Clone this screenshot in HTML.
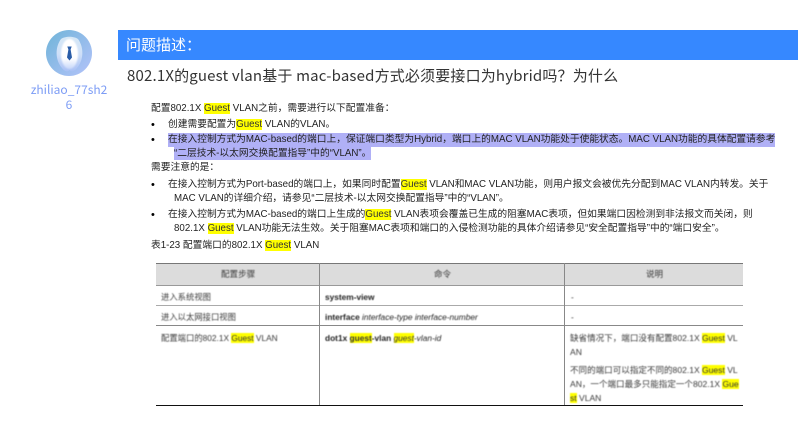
<!DOCTYPE html>
<html><head><meta charset="utf-8"><style>
html,body{margin:0;padding:0;background:#fff;width:811px;height:431px;overflow:hidden}
body{position:relative;font-family:"Noto Sans CJK SC","Liberation Sans",sans-serif}
.a{position:absolute;white-space:nowrap}
.bar{left:118px;top:30px;width:680px;height:30px;background:#3688ff;color:#fff;font-size:15px;line-height:30px;text-indent:8px}
.title{left:127px;top:64px;font-size:15px;line-height:24px;color:#333;letter-spacing:.17px}
.name{left:30px;width:78px;text-align:center;font-size:12px;line-height:15px;color:#7c9cf5;font-family:"Noto Sans CJK SC",sans-serif}
#doc{position:absolute;left:0;top:0;width:811px;height:431px;filter:blur(.3px)}
#tbl{position:absolute;left:0;top:0;width:811px;height:431px;filter:blur(.45px)}
.l{position:absolute;white-space:nowrap;font-family:"Liberation Sans","Noto Sans CJK SC",sans-serif;font-size:9.74px;line-height:14px;color:#222}
.s{font-size:8.33px;color:#3a3a3a;line-height:12px}
.w{font-size:8.55px}
mark{background:#ffff00;color:#333}
.r{position:absolute;background:#999}
b{color:#222}
</style></head><body>
<svg class="a" style="left:46px;top:30px" width="46" height="46" viewBox="0 0 46 46">
<defs><linearGradient id="g" x1="0" y1="0" x2="1" y2="1"><stop offset="0" stop-color="#6fb4d8"/><stop offset="1" stop-color="#b4c3fa"/></linearGradient>
<linearGradient id="w" x1="0" y1="0" x2="0" y2="1"><stop offset="0" stop-color="#d6e8f6"/><stop offset=".5" stop-color="#cfe0f8"/><stop offset="1" stop-color="#a9c0f5"/></linearGradient>
<linearGradient id="v" x1="0" y1="0" x2="0" y2="1"><stop offset="0" stop-color="#ffffff"/><stop offset=".65" stop-color="#ffffff"/><stop offset="1" stop-color="#c6d6f9"/></linearGradient>
<filter id="f"><feGaussianBlur stdDeviation=".8"/></filter></defs>
<circle cx="23" cy="23" r="23" fill="url(#g)"/>
<path d="M15 9 C19 6 28 6 32 9 C38 17 38 30 31 38 C28 42 25 42 23.5 40 C22 42 19 42 16 38 C9 30 9 17 15 9Z" fill="url(#w)"/>
<ellipse cx="23.5" cy="24" rx="8.5" ry="15" fill="url(#v)" filter="url(#f)"/>
<path d="M21.3 16.5h4.4l-1.1 3 1.4 8-2.5 3-2.5-3 1.4-8z" fill="#2a5da8"/>
</svg>
<div class="a name" style="top:82px">zhiliao_77sh2</div>
<div class="a name" style="top:97px">6</div>
<div class="a bar">问题描述：</div>
<div class="a title">802.1X的guest vlan基于 mac-based方式必须要接口为hybrid吗？为什么</div>
<div class="a" style="left:156px;top:264px;width:587px;height:21px;background:#dcdcdc"></div>
<div class="r" style="left:156px;top:263px;width:587px;height:1px;background:#777"></div>
<div class="r" style="left:156px;top:285px;width:587px;height:1px"></div>
<div class="r" style="left:156px;top:305px;width:587px;height:1px;background:#aaa"></div>
<div class="r" style="left:156px;top:325px;width:587px;height:1px;background:#888"></div>
<div class="r" style="left:156px;top:405px;width:587px;height:1px;background:#111"></div>
<div class="r" style="left:319px;top:263px;width:1px;height:142px;background:#888"></div>
<div class="r" style="left:564px;top:263px;width:1px;height:142px;background:#888"></div>
<div id="doc">
<div class="l" style="left:151px;top:102px">配置802.1X <mark>Guest</mark> VLAN之前，需要进行以下配置准备：</div>
<div class="l" style="left:151px;top:118px;font-size:11px;color:#000">•</div>
<div class="l" style="left:168px;top:118px">创建需要配置为<mark>Guest</mark> VLAN的VLAN。</div>
<div class="l" style="left:151px;top:133px;font-size:11px;color:#000">•</div>
<div class="a" style="left:168px;top:133px;width:607px;height:14px;background:#b0b0f6"></div>
<div class="a" style="left:174px;top:147px;width:197px;height:13px;background:#b0b0f6"></div>
<div class="l" style="left:168px;top:133px">在接入控制方式为MAC-based的端口上，保证端口类型为Hybrid，端口上的MAC VLAN功能处于使能状态。MAC VLAN功能的具体配置请参考</div>
<div class="l" style="left:174px;top:147px">“二层技术-以太网交换配置指导”中的“VLAN”。</div>
<div class="l" style="left:151px;top:161px">需要注意的是：</div>
<div class="l" style="left:151px;top:178px;font-size:11px;color:#000">•</div>
<div class="l" style="left:168px;top:178px">在接入控制方式为Port-based的端口上，如果同时配置<mark>Guest</mark> VLAN和MAC VLAN功能，则用户报文会被优先分配到MAC VLAN内转发。关于</div>
<div class="l" style="left:174px;top:192px">MAC VLAN的详细介绍，请参见“二层技术-以太网交换配置指导”中的“VLAN”。</div>
<div class="l" style="left:151px;top:208px;font-size:11px;color:#000">•</div>
<div class="l" style="left:168px;top:208px">在接入控制方式为MAC-based的端口上生成的<mark>Guest</mark> VLAN表项会覆盖已生成的阻塞MAC表项，但如果端口因检测到非法报文而关闭，则</div>
<div class="l" style="left:174px;top:222px">802.1X <mark>Guest</mark> VLAN功能无法生效。关于阻塞MAC表项和端口的入侵检测功能的具体介绍请参见“安全配置指导”中的“端口安全”。</div>
<div class="l" style="left:151px;top:239px">表1-23 配置端口的802.1X <mark>Guest</mark> VLAN</div>
</div>
<div id="tbl">
<div class="l s w" style="left:221px;top:268px">配置步骤</div>
<div class="l s w" style="left:434px;top:268px">命令</div>
<div class="l s w" style="left:646px;top:268px">说明</div>
<div class="l s" style="left:161px;top:291px">进入系统视图</div>
<div class="l s" style="left:325px;top:291px;color:#222"><b>system-view</b></div>
<div class="l s" style="left:571px;top:291px">-</div>
<div class="l s" style="left:161px;top:311px">进入以太网接口视图</div>
<div class="l s" style="left:325px;top:311px;color:#222"><b>interface</b> <i>interface-type interface-number</i></div>
<div class="l s" style="left:571px;top:311px">-</div>
<div class="l s" style="left:161px;top:332px">配置端口的802.1X <mark>Guest</mark> VLAN</div>
<div class="l s" style="left:325px;top:332px;color:#222"><b>dot1x <mark>guest</mark>-vlan</b> <i><mark>guest</mark>-vlan-id</i></div>
<div class="l s w" style="left:570px;top:332px">缺省情况下，端口没有配置802.1X <mark>Guest</mark> VL</div>
<div class="l s w" style="left:570px;top:346px">AN</div>
<div class="l s w" style="left:570px;top:364px">不同的端口可以指定不同的802.1X <mark>Guest</mark> VL</div>
<div class="l s w" style="left:570px;top:378px">AN，一个端口最多只能指定一个802.1X <mark>Gue</mark></div>
<div class="l s w" style="left:570px;top:392px"><mark>st</mark> VLAN</div>
</div>
</body></html>
